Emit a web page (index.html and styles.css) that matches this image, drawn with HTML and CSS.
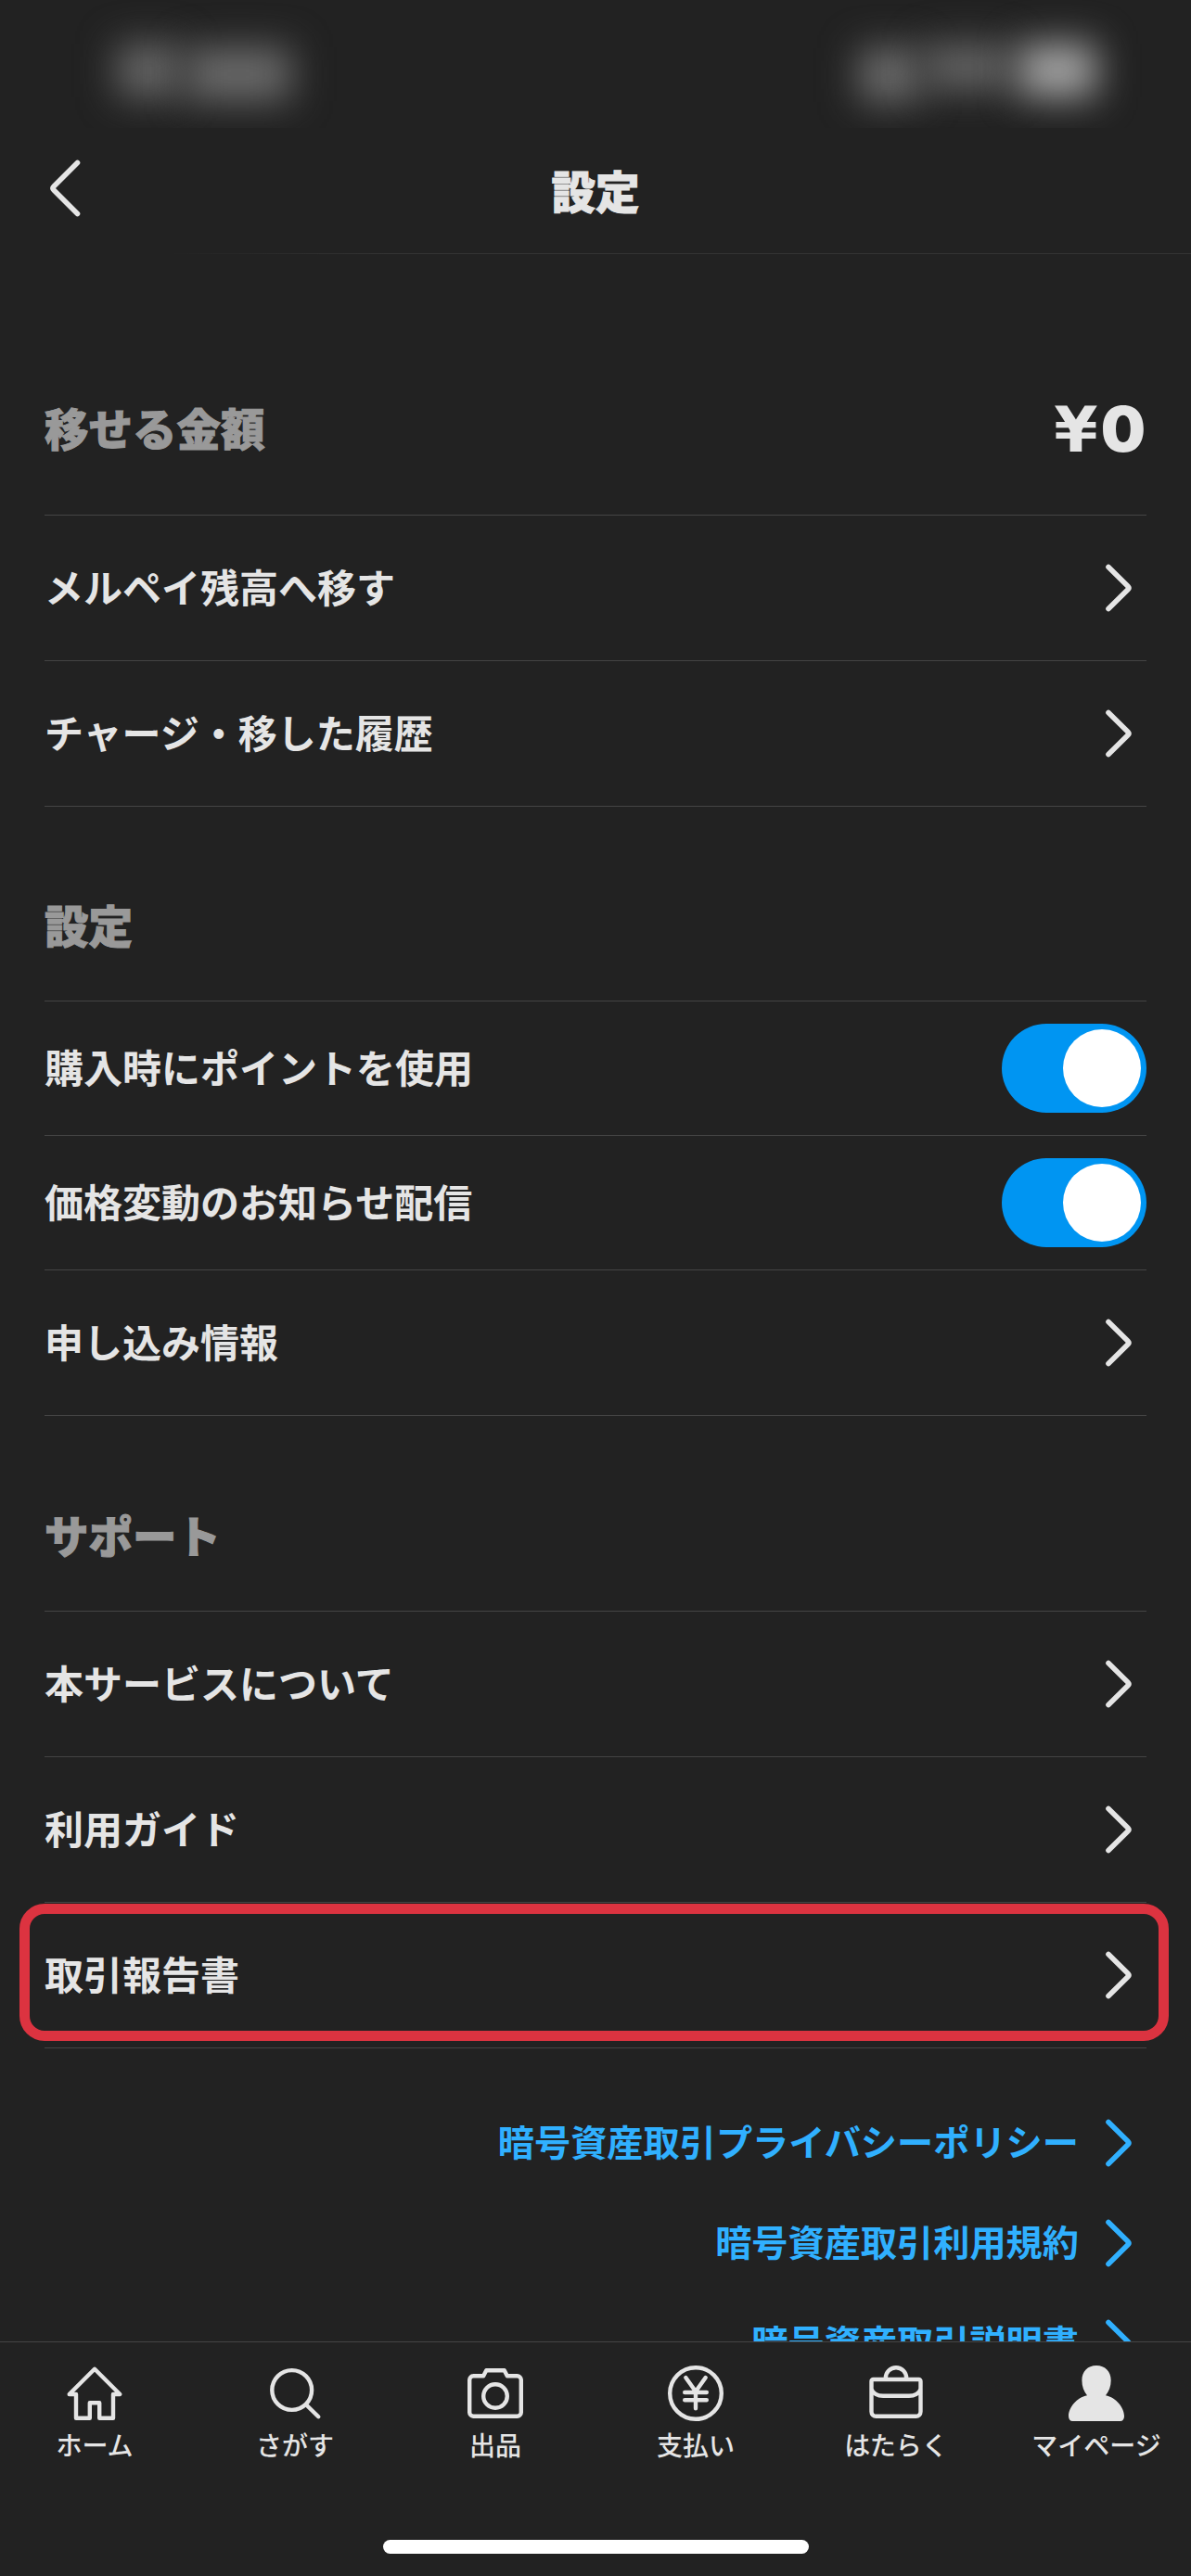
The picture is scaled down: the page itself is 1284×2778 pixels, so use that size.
FILE: index.html
```html
<!DOCTYPE html>
<html lang="ja">
<head>
<meta charset="utf-8">
<title>設定</title>
<link rel="stylesheet" href="styles.css">
</head>
<body>
<svg width="0" height="0" class="defs" aria-hidden="true">
  <symbol id="chevron" viewBox="0 0 32 56"><path d="M5 5.500 26 26.200Q27.800 28 26 29.800L5 50.500"/></symbol>
</svg>
<div class="screen">
  <div class="status">
    <div class="blur-group"><i class="b b1"></i><i class="b b2"></i></div>
    <div class="blur-group"><i class="b b3"></i><i class="b b4"></i><i class="b b5"></i></div>
  </div>
  <header class="header">
    <svg class="back" viewBox="0 0 36 64"><path d="M31.500 4.500 6 30Q4 32 6 34L31.500 59.500"/></svg>
    <h1 class="title">設定</h1>
  </header>
  <main class="content">
    <section class="section">
      <div class="head head-balance"><h2>移せる金額</h2><div class="amount"><span class="yen">¥</span>0</div></div>
      <div class="row"><span>メルペイ残高へ移す</span><svg class="chev"><use href="#chevron"/></svg></div>
      <div class="row"><span>チャージ・移した履歴</span><svg class="chev"><use href="#chevron"/></svg></div>
    </section>
    <section class="section section-settings">
      <div class="head"><h2>設定</h2></div>
      <div class="row row-toggle"><span>購入時にポイントを使用</span><div class="toggle"><div class="knob"></div></div></div>
      <div class="row row-toggle"><span>価格変動のお知らせ配信</span><div class="toggle"><div class="knob"></div></div></div>
      <div class="row"><span>申し込み情報</span><svg class="chev"><use href="#chevron"/></svg></div>
    </section>
    <section class="section section-support">
      <div class="head"><h2>サポート</h2></div>
      <div class="row"><span>本サービスについて</span><svg class="chev"><use href="#chevron"/></svg></div>
      <div class="row"><span>利用ガイド</span><svg class="chev"><use href="#chevron"/></svg></div>
      <div class="row row-marked"><span>取引報告書</span><svg class="chev"><use href="#chevron"/></svg></div>
    </section>
    <div class="links">
      <a class="link"><span>暗号資産取引プライバシーポリシー</span><svg class="chev"><use href="#chevron"/></svg></a>
      <a class="link"><span>暗号資産取引利用規約</span><svg class="chev"><use href="#chevron"/></svg></a>
      <a class="link"><span>暗号資産取引説明書</span><svg class="chev"><use href="#chevron"/></svg></a>
    </div>
  </main>
  <nav class="tabs">
    <div class="tab-list">
      <a class="tab"><svg viewBox="0 0 72 72"><path d="M36 9.8 63.3 37H56V62.8H41.2V46.2H30.8V62.8H16V37H8.7Z"/></svg><span>ホーム</span></a>
      <a class="tab"><svg viewBox="0 0 72 72"><circle cx="32.7" cy="32.5" r="21.4"/><path d="M48 48.2 61.3 61.2"/></svg><span>さがす</span></a>
      <a class="tab"><svg viewBox="0 0 72 72"><path d="M12.5 17.2H23.2L26.3 11.2H45.7L48.8 17.2H59.5A4.3 4.3 0 0 1 63.8 21.5V56.5A4.3 4.3 0 0 1 59.5 60.8H12.5A4.3 4.3 0 0 1 8.2 56.5V21.5A4.3 4.3 0 0 1 12.5 17.2Z"/><circle cx="36" cy="39" r="12.8"/></svg><span>出品</span></a>
      <a class="tab"><svg viewBox="0 0 72 72"><circle cx="36" cy="36" r="27.8"/><path d="M25.3 19 36 34 46.7 19M36 34V52.3M24.2 35H47.8M24.2 43.3H47.8"/></svg><span>支払い</span></a>
      <a class="tab"><svg viewBox="0 0 72 72"><path d="M11.5 21H60.5A2 2 0 0 1 62.5 23V55.8A5 5 0 0 1 57.5 60.8H14.5A5 5 0 0 1 9.5 55.8V23A2 2 0 0 1 11.5 21ZM24.8 21V19.4A11.2 11.2 0 0 1 47.2 19.4V21M9.5 31.5C11 36 16 38.8 22 38.8H50C56 38.8 61 36 62.5 31.5"/></svg><span>はたらく</span></a>
      <a class="tab"><svg class="filled" viewBox="0 0 72 72"><path d="M36 6C45.500 6 51.700 12.500 51.700 22 51.700 28.500 49.500 34 46 38.200 57 40.500 66 51 66 60.500 66 64 64.500 66 61.500 66H10.500C7.500 66 6 64 6 60.500 6 51 15 40.500 26 38.200 22.500 34 20.400 28.500 20.400 22 20.400 12.500 26.500 6 36 6Z"/></svg><span>マイページ</span></a>
    </div>
    <div class="home-bar"></div>
  </nav>
</div>
</body>
</html>
```
FILE: styles.css
```css
*, *::after { box-sizing: border-box; margin: 0; padding: 0; }

body {
  background: #222;
  color: #e5e5e5;
  font-family: "Noto Sans CJK JP", sans-serif;
}

.defs { position: absolute; }

svg {
  fill: none;
  stroke: currentColor;
  stroke-linecap: round;
  stroke-linejoin: round;
}

.screen {
  width: 1284px;
  height: 2778px;
  display: flex;
  flex-direction: column;
  overflow: hidden;
  background: #222;
}

/* status bar */
.status {
  height: 138px;
  flex: none;
  display: flex;
  justify-content: space-between;
  padding: 47px 102px 0 126px;
  overflow: hidden;
}
.blur-group { display: flex; }
.b { display: block; filter: blur(20px); height: 58px; background: #666; }
.b1 { width: 68px; }
.b2 { width: 114px; margin: 4px 0 0 6px; background: #6a6a6a; }
.b3 { width: 66px; margin-top: 5px; background: #6c6c6c; }
.b4 { width: 92px; height: 50px; margin-left: 4px; background: #646464; }
.b5 { width: 84px; margin-left: 10px; background: #a4a4a4; }

/* header */
.header {
  height: 136px;
  flex: none;
  display: grid;
  grid-template-columns: 1fr auto 1fr;
  align-items: center;
  padding: 0 52px 6px;
  background: linear-gradient(90deg, #222 180px, #333 420px) bottom / 100% 1px no-repeat;
}
.back { width: 36px; height: 64px; stroke-width: 5.6; }
.title {
  padding-top: 3px;
  font-size: 47.5px;
  line-height: 72px;
  font-weight: 900;
  -webkit-text-stroke: 1px currentColor;
}

/* content */
.content {
  height: 2251px;
  flex: none;
  overflow: hidden;
  padding: 97px 48px 0;
}
.section { margin-bottom: 49px; }
.section-settings { margin-bottom: 50px; }
.section-support { margin-bottom: 48px; }
.head {
  height: 161px;
  display: flex;
  align-items: center;
  justify-content: space-between;
  border-bottom: 1px solid #444;
}
.head-balance { height: 185px; }
.head h2 {
  padding-bottom: 4px;
  font-size: 47.5px;
  line-height: 72px;
  font-weight: 900;
  color: #999;
  -webkit-text-stroke: 1px currentColor;
}
.amount {
  padding-right: 1px;
  font: 900 68px/80px Inter, sans-serif;
}
.yen {
  margin-right: 3px;
  font-family: "DejaVu Sans", sans-serif;
  font-weight: 700;
}

.row {
  height: 157px;
  display: flex;
  align-items: center;
  justify-content: space-between;
  border-bottom: 1px solid #444;
  font-size: 42px;
  font-weight: 700;
}
.row > span, .link > span { padding-bottom: 6px; }
.row-toggle { height: 145px; }
.row-marked { position: relative; }
.row-marked::after {
  content: "";
  position: absolute;
  left: -27px;
  right: -24px;
  top: 1px;
  height: 148px;
  border: 11px solid #dc3340;
  border-radius: 27px;
}

.chev { width: 32px; height: 56px; stroke-width: 5.6; margin-right: 14px; flex: none; }

.toggle {
  width: 156px;
  height: 96px;
  padding: 6px;
  display: flex;
  justify-content: flex-end;
  border-radius: 48px;
  background: #0095f2;
}
.knob { width: 84px; height: 84px; border-radius: 50%; background: #fff; }

.links { color: #30b0ff; }
.link {
  height: 108px;
  display: flex;
  align-items: center;
  justify-content: flex-end;
  gap: 27px;
  font-size: 39.2px;
  font-weight: 700;
}

/* tab bar */
.tabs {
  flex: 1;
  border-top: 1px solid #444;
  display: flex;
  flex-direction: column;
  align-items: center;
  justify-content: space-between;
  padding: 19px 0 24px;
}
.tab-list { display: flex; flex: none; }
.tab {
  width: 216px;
  display: flex;
  flex-direction: column;
  align-items: center;
  font-size: 28px;
  line-height: 38px;
  font-weight: 500;
}
.tab svg { width: 72px; height: 72px; stroke-width: 4.4; }
.tab svg.filled { fill: currentColor; stroke: none; }
.home-bar { width: 459px; height: 15px; border-radius: 8px; background: #fff; }
```
